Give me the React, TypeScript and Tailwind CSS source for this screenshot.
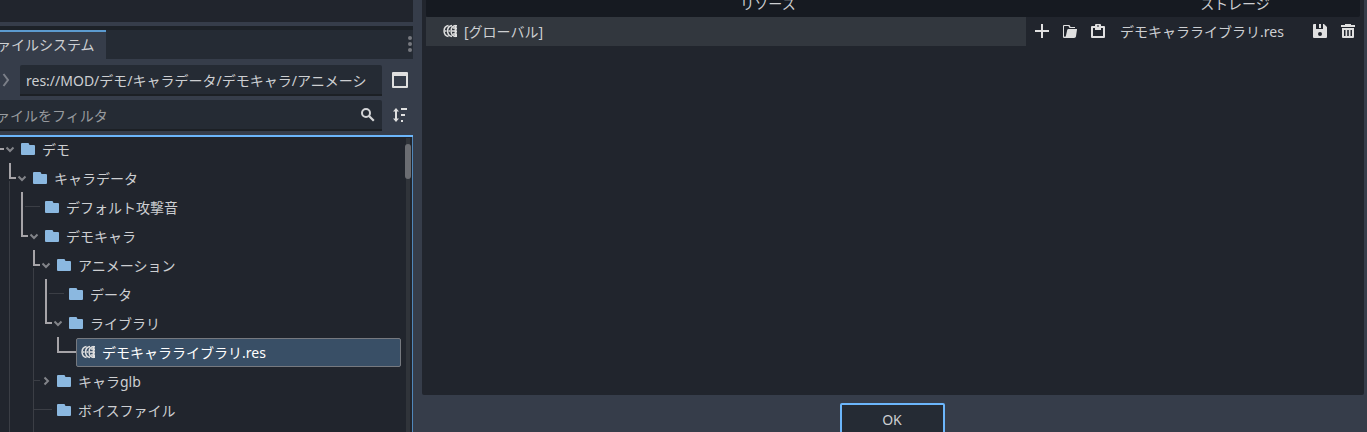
import type { ReactNode } from 'react';

type IconProps = { className?: string };

function Icon({ className = '', children }: IconProps & { children: ReactNode }) {
  return (
    <svg viewBox="0 0 16 16" width="16" height="16" className={`shrink-0 ${className}`} fill="#e0e0e0">
      {children}
    </svg>
  );
}

const FolderIcon = () => (
  <Icon>
    <path fill="#8bb8e0" d="M2 2a1 1 0 0 0-1 1v10a1 1 0 0 0 1 1h12a1 1 0 0 0 1-1V5a1 1 0 0 0-1-1h-4a1 1 0 0 1-1-1 1 1 0 0 0-1-1z" />
  </Icon>
);

const LibraryIcon = () => (
  <Icon>
    <path d="M6.500 2.500C.6 3.500.6 12.500 6.500 13.500M10 2.500C4.100 3.500 4.100 12.500 10 13.500M13.500 2.500C7.600 3.500 7.600 12.500 13.500 13.500" fill="none" stroke="#e0e0e0" strokeWidth="1.500" />
    <path d="M3 8h1.500M6.500 8H8M10 8h3M11 5h2M11 11h2" fill="none" stroke="#e0e0e0" strokeWidth="1.400" />
    <path d="M12.600 2H15v1.500h-.6v1H15v2h-.6v1H15v2h-.6v1H15V14h-2.400z" />
  </Icon>
);

const AddIcon = () => <Icon><path d="M7 1v6H1v2h6v6h2V9h6V7H9V1z" /></Icon>;

const LoadIcon = () => (
  <Icon>
    <path d="M2 2a1 1 0 0 0-1 1v10a1.500 1.500 0 0 0 1.500 2H12c1.200 0 1.800-.6 2-1.700L15 6.500c.1-.4-.1-.5-.5-.5H6.500c-.7 0-1.100.3-1.300 1L4 12.500c-.2.8-.6 1.300-1 1.300-.6 0-1-.4-1-1V3.500c0-.3.200-.5.500-.5H6c.4 0 .6.200.8.600L7.500 5H13V4H8.500L8 2.800C7.800 2.300 7.500 2 7 2z" />
  </Icon>
);

const PasteIcon = () => (
  <Icon>
    <path fillRule="evenodd" d="M6 1a1 1 0 0 0-1 1v1H2a1 1 0 0 0-1 1v10a1 1 0 0 0 1 1h12a1 1 0 0 0 1-1V4a1 1 0 0 0-1-1h-3V2a1 1 0 0 0-1-1zM3 5h2v2h6V5h2v8H3zM7.300 2.300h1.400v1.400H7.300z" />
  </Icon>
);

const SaveIcon = () => (
  <Icon>
    <path fillRule="evenodd" d="M2 1a1 1 0 0 0-1 1v12a1 1 0 0 0 1 1h12a1 1 0 0 0 1-1V4l-3-3h-1v5H4V1zM7 1v4h2V1zM8 9a2 2 0 1 1 0 4 2 2 0 0 1 0-4z" />
  </Icon>
);

const TrashIcon = () => (
  <Icon>
    <path fillRule="evenodd" d="M5 1v1H1v2h14V2h-4V1zM2 5v9a1 1 0 0 0 1 1h10a1 1 0 0 0 1-1V5zM4 7h1.500v6H4zM7.200 7h1.600v6H7.200zM10.500 7H12v6h-1.500z" />
  </Icon>
);

const SplitIcon = () => (
  <Icon>
    <path fillRule="evenodd" d="M1 0a1 1 0 0 0-1 1v14a1 1 0 0 0 1 1h14a1 1 0 0 0 1-1V1a1 1 0 0 0-1-1zM2 4h12v10H2z" />
  </Icon>
);

const SortIcon = () => (
  <Icon>
    <path d="M4 1 1 4.500h2v7H1L4 15l3-3.500H5v-7h2zM9 1h6v2H9zM9 7h4v2H9zM9 13h2v2H9z" />
  </Icon>
);

const SearchIcon = () => (
  <Icon>
    <circle cx="6" cy="7" r="4" fill="none" stroke="#d4d5d7" strokeWidth="2" />
    <path d="m9 10 4.800 4.800" stroke="#d4d5d7" strokeWidth="2.200" />
  </Icon>
);

type Row = { name: string; kind: 'open' | 'closed' | 'leaf' | 'selected'; indent: string };

const rows: Row[] = [
  { name: 'デモ', kind: 'open', indent: 'pl-1' },
  { name: 'キャラデータ', kind: 'open', indent: 'pl-4' },
  { name: 'デフォルト攻撃音', kind: 'leaf', indent: 'pl-7' },
  { name: 'デモキャラ', kind: 'open', indent: 'pl-7' },
  { name: 'アニメーション', kind: 'open', indent: 'pl-10' },
  { name: 'データ', kind: 'leaf', indent: 'pl-[52px]' },
  { name: 'ライブラリ', kind: 'open', indent: 'pl-[52px]' },
  { name: 'デモキャラライブラリ.res', kind: 'selected', indent: 'pl-[76px]' },
  { name: 'キャラglb', kind: 'closed', indent: 'pl-10' },
  { name: 'ボイスファイル', kind: 'leaf', indent: 'pl-10' },
];

function Chevron({ kind }: { kind: Row['kind'] }) {
  return (
    <svg viewBox="0 0 12 16" width="12" height="16" className="mr-1 shrink-0" fill="none" stroke="#828489" strokeWidth="2">
      {kind === 'open' && <path d="m2.500 6.500 3.500 3.500 3.500-3.500" />}
      {kind === 'closed' && <path d="m4.500 4.500 3.500 3.500-3.500 3.500" />}
    </svg>
  );
}

function TreeRow({ row }: { row: Row }) {
  if (row.kind === 'selected') {
    return (
      <div className={`flex h-[29px] w-[401px] shrink-0 ${row.indent}`}>
        <div className="flex h-full flex-1 items-start rounded-[2px] border border-[#76797f] bg-[#394f66] pl-[3px] pt-[5px] text-white">
          <LibraryIcon />
          <span className="ml-[6px] -mt-px">{row.name}</span>
        </div>
      </div>
    );
  }
  return (
    <div className={`flex h-[29px] shrink-0 items-start pt-[6px] ${row.indent}`}>
      <Chevron kind={row.kind} />
      <FolderIcon />
      <span className="-mt-px ml-[6px]">{row.name}</span>
    </div>
  );
}

function TreeLines() {
  return (
    <svg className="pointer-events-none absolute left-0 top-0" width="80" height="297" viewBox="0 135 80 297" fill="none" shapeRendering="crispEdges">
      <path stroke="#3b3e45" d="M9.500 181v251M33.500 268v164M25 206.500h15M49 293.500h15M34 380.500h6M34 409.500h18" />
      <path stroke="#a6a4a8" strokeWidth="2" d="M0 149h4M10 163v15h6M22 192v44h6M34 250v15h6M46 279v44h6M58 337v15h18" />
    </svg>
  );
}

function FileSystemDock() {
  return (
    <aside className="flex h-full w-[413px] shrink-0 flex-col overflow-hidden bg-[#363d4a]">
      <div className="h-[22px] shrink-0 bg-[#21252d]" />
      <div className="mt-1 h-1 shrink-0 bg-[#1d2228]" />
      <div className="flex h-[29px] shrink-0 justify-between bg-[#252b34]">
        <div className="flex w-[106px] items-start overflow-hidden border-t-2 border-[#5c9bd0] bg-[#363d4a] pt-[3px]">
          <span className="-ml-[17px]">ファイルシステム</span>
        </div>
        <svg width="4" height="29" viewBox="0 0 4 29" className="mr-[1px]" fill="#77797f">
          <circle cx="2" cy="8" r="2" />
          <circle cx="2" cy="14" r="2" />
          <circle cx="2" cy="20" r="2" />
        </svg>
      </div>
      <div className="flex shrink-0 items-start pt-[6px]">
        <svg width="20" height="31" viewBox="0 0 20 31" fill="none" stroke="#7b7f88" strokeWidth="2">
          <path d="m3.500 9 4.500 6-4.500 6" />
        </svg>
        <div className="flex h-[31px] w-[362px] items-start overflow-hidden rounded-t-[2px] border-b-2 border-[#1c2025] bg-[#252b34] pl-[6px] pt-[6px]">
          res://MOD/デモ/キャラデータ/デモキャラ/アニメーシ
        </div>
        <div className="ml-[10px] mt-[7px] flex"><SplitIcon /></div>
      </div>
      <div className="mt-1 flex shrink-0 items-start">
        <div className="flex h-[31px] w-[382px] items-start justify-between overflow-hidden rounded-tr-[2px] border-b-2 border-[#1c2025] bg-[#252b34] pr-[6px] pt-[6px] text-[#989b9f]">
          <span className="-ml-[18px]">ファイルをフィルタ</span>
          <SearchIcon />
        </div>
        <div className="ml-[10px] mt-[7px] flex"><SortIcon /></div>
      </div>
      <div className="relative mt-1 flex h-[297px] shrink-0 overflow-hidden bg-[#21252d]">
        <div className="flex flex-1 flex-col">
          {rows.map((row) => <TreeRow key={row.name} row={row} />)}
        </div>
        <TreeLines />
        <div className="mt-[3px] flex w-[6px] justify-center bg-[linear-gradient(90deg,transparent_1px,#30343a_1px,#30343a_5px,transparent_5px)]">
          <div className="mt-[6px] h-[35px] w-[6px] rounded-[3px] bg-[#6b6d72]" />
        </div>
        <div className="ml-[1px] w-[1px] bg-[#5087ba]" />
        <div className="absolute inset-x-0 top-0 h-[2px] bg-[#6cb6fb]" />
      </div>
    </aside>
  );
}

function LibraryDialog() {
  return (
    <section className="flex h-full flex-1 flex-col overflow-hidden bg-[#363d4a] pl-[9px] pr-[3px]">
      <div className="h-[395px] shrink-0 rounded-b-[2px] bg-[#21252d] pl-1 pr-1">
        <div className="flex h-[17px] overflow-hidden rounded-b-[2px] bg-[#161a21] text-center leading-[29px]">
          <div className="-mt-[11px] w-[684px]">リソース</div>
          <div className="-mt-[11px] w-[250px]">ストレージ</div>
        </div>
        <div className="flex h-[29px] items-start">
          <div className="flex h-[29px] w-[600px] items-start bg-[#32373e] pl-4 pt-[6px]">
            <LibraryIcon />
            <span className="-mt-px ml-[6px]">[グローバル]</span>
          </div>
          <div className="ml-2 mt-[6px] flex gap-3">
            <AddIcon />
            <LoadIcon />
            <PasteIcon />
          </div>
          <span className="ml-[14px] mt-[5px] flex-1">デモキャラライブラリ.res</span>
          <div className="mr-1 mt-[6px] flex gap-3">
            <SaveIcon />
            <TrashIcon />
          </div>
        </div>
      </div>
      <button className="ml-[418px] mt-2 flex h-[35px] w-[105px] shrink-0 items-start justify-center rounded-[2px] border-2 border-[#6cb6fb] bg-[#252b34] pr-px pt-[5px]">
        OK
      </button>
    </section>
  );
}

export default function App() {
  return (
    <main className="flex h-[432px] w-[1367px] overflow-hidden whitespace-nowrap bg-[#21252d] font-['Noto_Sans','Noto_Sans_CJK_JP',sans-serif] text-[14px] leading-[20px] text-[#cdcfd2]">
      <FileSystemDock />
      <LibraryDialog />
    </main>
  );
}
